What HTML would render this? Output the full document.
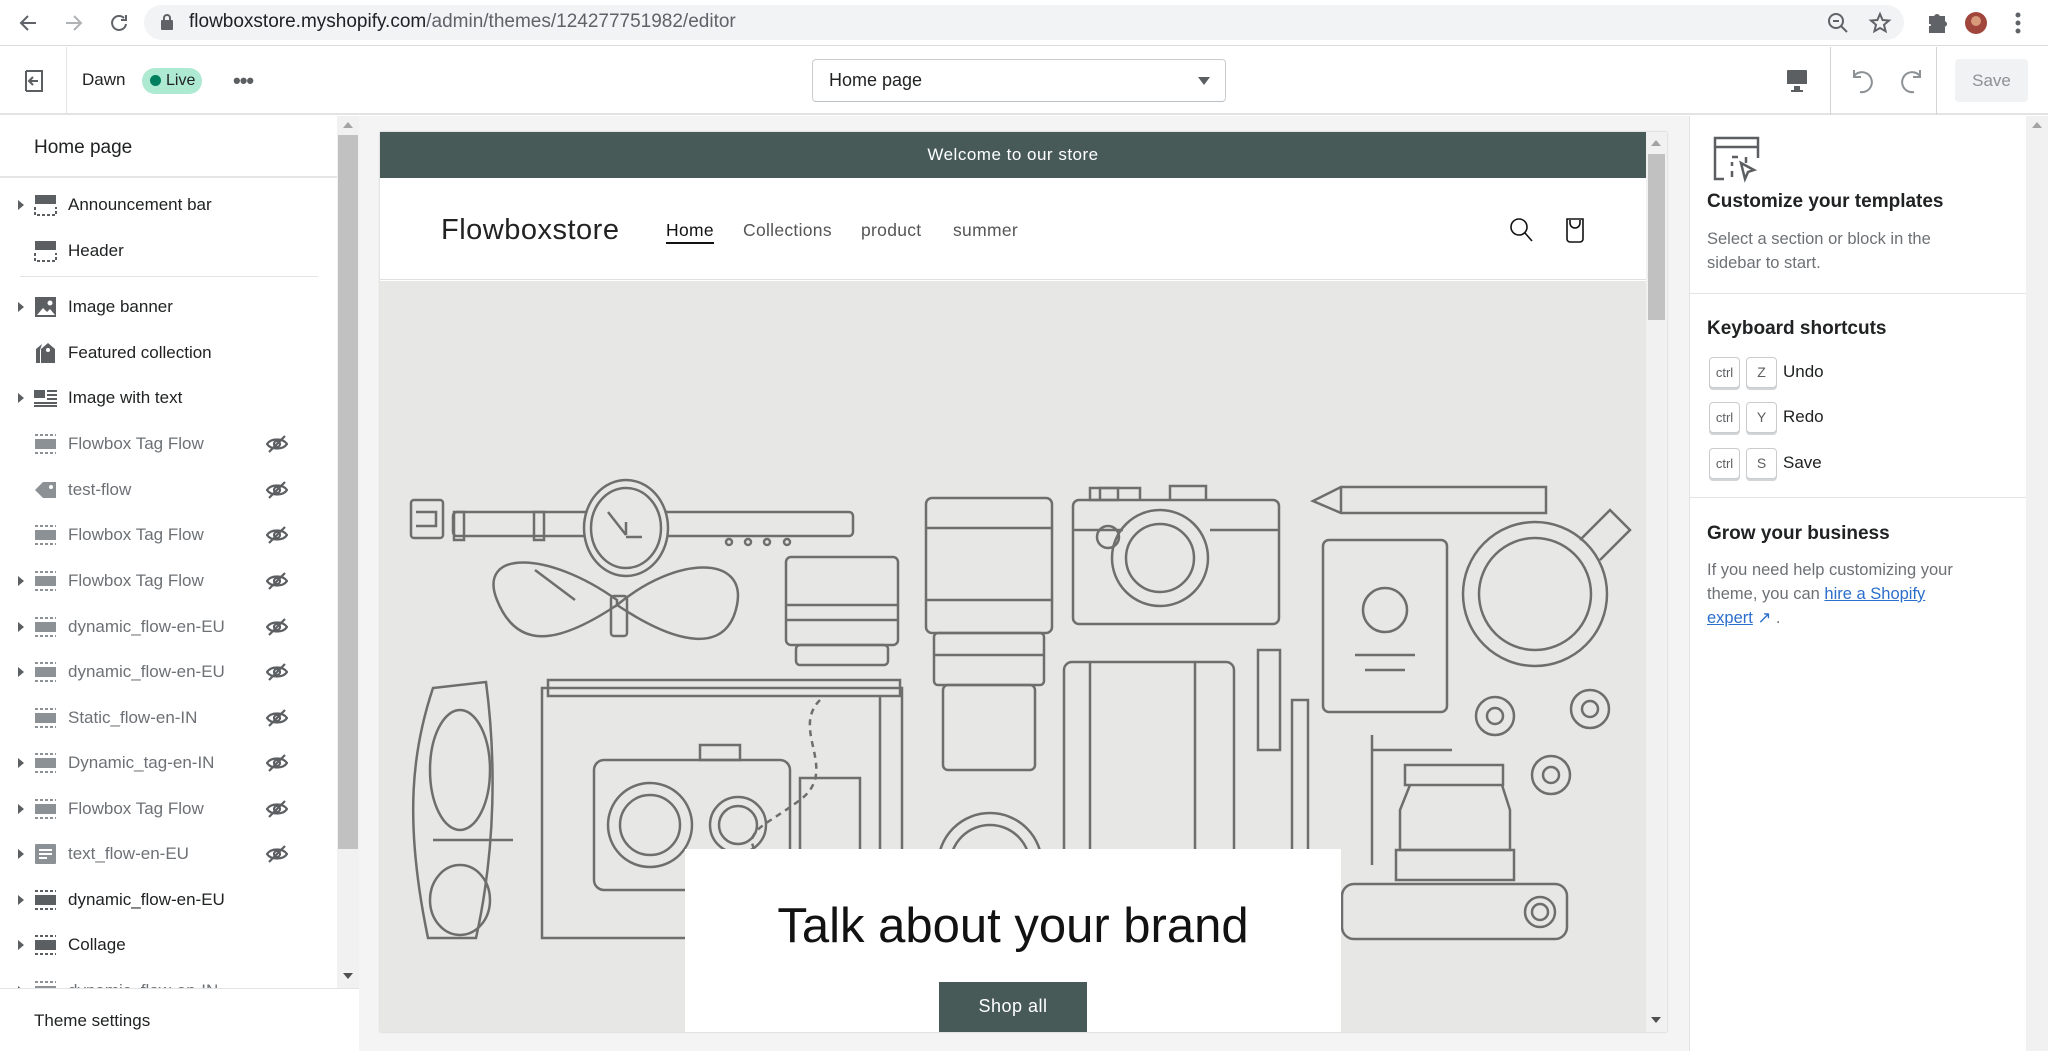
<!DOCTYPE html>
<html><head><meta charset="utf-8"><style>
*{box-sizing:border-box;margin:0;padding:0}
body{width:2048px;height:1051px;overflow:hidden;background:#fff;font-family:"Liberation Sans",sans-serif;position:relative;color:#202223}
.a{position:absolute}
.side-item{position:absolute;left:0;width:337px;height:46px;font-size:17px;display:flex;align-items:center}
.side-item .ar{position:absolute;left:18px;width:0;height:0;border-top:5px solid transparent;border-bottom:5px solid transparent;border-left:6px solid #5c5f62}
.side-item .ic{position:absolute;left:34px;width:23px;height:22px}
.side-item .tx{position:absolute;left:68px}
.side-item .eye{position:absolute;left:266px}
.g{color:#6d7175}
.key{display:inline-block;width:31px;height:31px;border:1px solid #c9cccf;border-radius:4px;box-shadow:0 2px 0 #d2d5d8;font-size:14px;color:#5c5f62;text-align:center;line-height:29px;margin-right:6px;background:#fff}
</style></head><body>

<div class="a" style="left:0;top:0;width:2048px;height:46px;background:#fff;border-bottom:1px solid #dadce0"></div>
<svg class="a" style="left:16px;top:11px" width="120" height="24" viewBox="0 0 120 24" fill="none" stroke="#5f6368" stroke-width="2">
<path d="M20 12H6M12 5l-7 7 7 7"/><path d="M50 12h14M58 5l7 7-7 7" stroke="#b0b3b6"/><path d="M108 7a7 7 0 1 0 2 6M110 4v5h-5"/></svg>
<div class="a" style="left:144px;top:5px;width:1760px;height:35px;background:#f1f3f4;border-radius:18px"></div>
<svg class="a" style="left:160px;top:13px" width="14" height="18" viewBox="0 0 14 18"><rect x="1" y="7" width="12" height="10" rx="1" fill="#5f6368"/><path d="M4 7V5a3 3 0 0 1 6 0v2" stroke="#5f6368" stroke-width="2" fill="none"/></svg>
<div class="a" style="left:189px;top:11px;font-size:19px;color:#202124">flowboxstore.myshopify.com<span style="color:#5f6368">/admin/themes/124277751982/editor</span></div>
<svg class="a" style="left:1826px;top:11px" width="210" height="24" viewBox="0 0 210 24" fill="none" stroke="#5f6368" stroke-width="2">
<circle cx="10" cy="10" r="7"/><path d="M15 15l6 6M7 10h6"/>
<path d="M54 3l2.6 6 6.4.5-5 4.3 1.6 6.4L54 17l-5.6 3.2L50 13.8l-5-4.3 6.4-.5z"/>
<path d="M104 6h5a2 2 0 0 1 4 0h5v5a2 2 0 0 1 0 4v6h-14v-5a2 2 0 0 0 0-4z" fill="#5f6368"/>
<circle cx="150" cy="12" r="11" fill="#a0463d" stroke="none"/><circle cx="150" cy="10" r="5" fill="#d89a7a" stroke="none"/>
<circle cx="192" cy="4" r="1.5" fill="#5f6368"/><circle cx="192" cy="12" r="1.5" fill="#5f6368"/><circle cx="192" cy="20" r="1.5" fill="#5f6368"/></svg>

<div class="a" style="left:0;top:47px;width:2048px;height:68px;background:#fff;border-bottom:2px solid #e1e3e5"></div>
<div class="a" style="left:66px;top:47px;width:1px;height:68px;background:#e1e3e5"></div>
<svg class="a" style="left:24px;top:70px" width="20" height="22" viewBox="0 0 20 22" fill="none" stroke="#5c5f62" stroke-width="2"><path d="M2 1v20M2 1h16v20H2M14 11H6M9 7l-4 4 4 4"/></svg>
<div class="a" style="left:82px;top:70px;font-size:17px;color:#202223">Dawn</div>
<div class="a" style="left:142px;top:68px;width:60px;height:26px;border-radius:13px;background:#aee9d1;font-size:16px;line-height:26px;padding-left:24px;color:#202223">Live</div>
<div class="a" style="left:150px;top:75px;width:11px;height:11px;border-radius:50%;background:#007f5f"></div>
<div class="a" style="left:233px;top:68px;font-size:22px;color:#5c5f62;letter-spacing:-1px;font-weight:bold">•••</div>
<div class="a" style="left:812px;top:59px;width:414px;height:43px;border:1px solid #c9cccf;border-bottom-color:#babfc3;border-radius:4px;font-size:18px;line-height:41px;padding-left:16px">Home page</div>
<div class="a" style="left:1198px;top:77px;border-left:6px solid transparent;border-right:6px solid transparent;border-top:8px solid #5c5f62"></div>
<svg class="a" style="left:1785px;top:69px" width="24" height="24" viewBox="0 0 24 24"><rect x="2" y="1" width="20" height="16" rx="1" fill="#5c5f62"/><rect x="2" y="15" width="20" height="2" fill="#fff"/><rect x="9" y="17" width="6" height="4" fill="#5c5f62"/><rect x="6" y="21" width="12" height="2" fill="#5c5f62"/></svg>
<div class="a" style="left:1830px;top:47px;width:1px;height:68px;background:#d2d5d8"></div>
<div class="a" style="left:1936px;top:47px;width:1px;height:68px;background:#d2d5d8"></div>
<svg class="a" style="left:1848px;top:67px" width="80" height="28" viewBox="0 0 80 28" fill="none" stroke="#8c9196" stroke-width="2"><path d="M6 3v7h7M6 9a10 10 0 1 1 6 16"/><path d="M72 3v7h-7M72 9a10 10 0 1 0-6 16"/></svg>
<div class="a" style="left:1955px;top:59px;width:73px;height:43px;background:#f1f2f3;border-radius:4px;font-size:17px;color:#8c9196;text-align:center;line-height:43px">Save</div>

<div class="a" style="left:0;top:116px;width:337px;height:935px;background:#fff"></div>
<div class="a" style="left:34px;top:137px;font-size:19px">Home page</div>
<div class="a" style="left:0;top:176px;width:337px;height:2px;background:#e4e5e7"></div>
<div class="a" style="left:20px;top:276px;width:298px;height:1px;background:#e1e3e5"></div>
<div class="a" style="left:337px;top:116px;width:22px;height:875px;background:#f1f1f1"></div>
<div class="a" style="left:338px;top:135px;width:20px;height:714px;background:#c1c1c1"></div>
<div class="a" style="left:343px;top:122px;border-left:5px solid transparent;border-right:5px solid transparent;border-bottom:6px solid #a3a3a3"></div>
<div class="a" style="left:343px;top:973px;border-left:5px solid transparent;border-right:5px solid transparent;border-top:6px solid #505050"></div>

<div class="side-item" style="top:182px"><span class="ar"></span><svg class="ic" viewBox="0 0 23 22"><rect x="1" y="1" width="21" height="9" fill="#5c5f62"/><path d="M1 13v8h21v-8" stroke="#5c5f62" stroke-width="2" stroke-dasharray="3 2" fill="none"/></svg><span class="tx">Announcement bar</span></div>
<div class="side-item" style="top:228px"><svg class="ic" viewBox="0 0 23 22"><rect x="1" y="1" width="21" height="9" fill="#5c5f62"/><path d="M1 13v8h21v-8" stroke="#5c5f62" stroke-width="2" stroke-dasharray="3 2" fill="none"/></svg><span class="tx">Header</span></div>
<div class="side-item" style="top:284px"><span class="ar"></span><svg class="ic" viewBox="0 0 23 22"><rect x="1" y="1" width="21" height="20" fill="#5c5f62"/><path d="M3 19l6-7 4 4 3-3 5 6z" fill="#fff"/><circle cx="16" cy="7" r="2.5" fill="#fff"/></svg><span class="tx">Image banner</span></div>
<div class="side-item" style="top:330px"><svg class="ic" viewBox="0 0 23 22"><path d="M8 2l-6 5v14h4V8z" fill="#5c5f62"/><path d="M14 1l-7 6v14h14V7z" fill="#5c5f62"/><circle cx="14" cy="8" r="2" fill="#fff"/></svg><span class="tx">Featured collection</span></div>
<div class="side-item" style="top:375px"><span class="ar"></span><svg class="ic" viewBox="0 0 23 22"><rect x="0" y="3" width="11" height="8" fill="#5c5f62"/><path d="M13 4h10M13 8h10M13 12h10M0 16h23M0 19h23" stroke="#5c5f62" stroke-width="2"/></svg><span class="tx">Image with text</span></div>

<div class="side-item g" style="top:421px"><svg class="ic" viewBox="0 0 23 22"><rect x="1" y="6" width="21" height="10" fill="#8c9196"/><path d="M1 2h21M1 20h21" stroke="#8c9196" stroke-width="2" stroke-dasharray="3 2"/></svg><span class="tx">Flowbox Tag Flow</span><svg class="eye" width="22" height="20" viewBox="0 0 22 20" fill="none" stroke="#5c5f62" stroke-width="2.2"><path d="M1 10c4-6 16-6 20 0-4 6-16 6-20 0z"/><circle cx="11" cy="10" r="3"/><path d="M3 18L19 2"/></svg></div>
<div class="side-item g" style="top:467px"><svg class="ic" viewBox="0 0 23 22"><path d="M1 11l8-8h13v16H9z" fill="#8c9196"/><circle cx="17" cy="8" r="2" fill="#fff"/></svg><span class="tx">test-flow</span><svg class="eye" width="22" height="20" viewBox="0 0 22 20" fill="none" stroke="#5c5f62" stroke-width="2.2"><path d="M1 10c4-6 16-6 20 0-4 6-16 6-20 0z"/><circle cx="11" cy="10" r="3"/><path d="M3 18L19 2"/></svg></div>
<div class="side-item g" style="top:512px"><svg class="ic" viewBox="0 0 23 22"><rect x="1" y="6" width="21" height="10" fill="#8c9196"/><path d="M1 2h21M1 20h21" stroke="#8c9196" stroke-width="2" stroke-dasharray="3 2"/></svg><span class="tx">Flowbox Tag Flow</span><svg class="eye" width="22" height="20" viewBox="0 0 22 20" fill="none" stroke="#5c5f62" stroke-width="2.2"><path d="M1 10c4-6 16-6 20 0-4 6-16 6-20 0z"/><circle cx="11" cy="10" r="3"/><path d="M3 18L19 2"/></svg></div>
<div class="side-item g" style="top:558px"><span class="ar"></span><svg class="ic" viewBox="0 0 23 22"><rect x="1" y="6" width="21" height="10" fill="#8c9196"/><path d="M1 2h21M1 20h21" stroke="#8c9196" stroke-width="2" stroke-dasharray="3 2"/></svg><span class="tx">Flowbox Tag Flow</span><svg class="eye" width="22" height="20" viewBox="0 0 22 20" fill="none" stroke="#5c5f62" stroke-width="2.2"><path d="M1 10c4-6 16-6 20 0-4 6-16 6-20 0z"/><circle cx="11" cy="10" r="3"/><path d="M3 18L19 2"/></svg></div>
<div class="side-item g" style="top:604px"><span class="ar"></span><svg class="ic" viewBox="0 0 23 22"><rect x="1" y="6" width="21" height="10" fill="#8c9196"/><path d="M1 2h21M1 20h21" stroke="#8c9196" stroke-width="2" stroke-dasharray="3 2"/></svg><span class="tx">dynamic_flow-en-EU</span><svg class="eye" width="22" height="20" viewBox="0 0 22 20" fill="none" stroke="#5c5f62" stroke-width="2.2"><path d="M1 10c4-6 16-6 20 0-4 6-16 6-20 0z"/><circle cx="11" cy="10" r="3"/><path d="M3 18L19 2"/></svg></div>
<div class="side-item g" style="top:649px"><span class="ar"></span><svg class="ic" viewBox="0 0 23 22"><rect x="1" y="6" width="21" height="10" fill="#8c9196"/><path d="M1 2h21M1 20h21" stroke="#8c9196" stroke-width="2" stroke-dasharray="3 2"/></svg><span class="tx">dynamic_flow-en-EU</span><svg class="eye" width="22" height="20" viewBox="0 0 22 20" fill="none" stroke="#5c5f62" stroke-width="2.2"><path d="M1 10c4-6 16-6 20 0-4 6-16 6-20 0z"/><circle cx="11" cy="10" r="3"/><path d="M3 18L19 2"/></svg></div>
<div class="side-item g" style="top:695px"><svg class="ic" viewBox="0 0 23 22"><rect x="1" y="6" width="21" height="10" fill="#8c9196"/><path d="M1 2h21M1 20h21" stroke="#8c9196" stroke-width="2" stroke-dasharray="3 2"/></svg><span class="tx">Static_flow-en-IN</span><svg class="eye" width="22" height="20" viewBox="0 0 22 20" fill="none" stroke="#5c5f62" stroke-width="2.2"><path d="M1 10c4-6 16-6 20 0-4 6-16 6-20 0z"/><circle cx="11" cy="10" r="3"/><path d="M3 18L19 2"/></svg></div>
<div class="side-item g" style="top:740px"><span class="ar"></span><svg class="ic" viewBox="0 0 23 22"><rect x="1" y="6" width="21" height="10" fill="#8c9196"/><path d="M1 2h21M1 20h21" stroke="#8c9196" stroke-width="2" stroke-dasharray="3 2"/></svg><span class="tx">Dynamic_tag-en-IN</span><svg class="eye" width="22" height="20" viewBox="0 0 22 20" fill="none" stroke="#5c5f62" stroke-width="2.2"><path d="M1 10c4-6 16-6 20 0-4 6-16 6-20 0z"/><circle cx="11" cy="10" r="3"/><path d="M3 18L19 2"/></svg></div>
<div class="side-item g" style="top:786px"><span class="ar"></span><svg class="ic" viewBox="0 0 23 22"><rect x="1" y="6" width="21" height="10" fill="#8c9196"/><path d="M1 2h21M1 20h21" stroke="#8c9196" stroke-width="2" stroke-dasharray="3 2"/></svg><span class="tx">Flowbox Tag Flow</span><svg class="eye" width="22" height="20" viewBox="0 0 22 20" fill="none" stroke="#5c5f62" stroke-width="2.2"><path d="M1 10c4-6 16-6 20 0-4 6-16 6-20 0z"/><circle cx="11" cy="10" r="3"/><path d="M3 18L19 2"/></svg></div>
<div class="side-item g" style="top:831px"><span class="ar"></span><svg class="ic" viewBox="0 0 23 22"><rect x="1" y="1" width="21" height="20" rx="1" fill="#8c9196"/><path d="M5 7h13M5 11h13M5 15h8" stroke="#fff" stroke-width="2"/></svg><span class="tx">text_flow-en-EU</span><svg class="eye" width="22" height="20" viewBox="0 0 22 20" fill="none" stroke="#5c5f62" stroke-width="2.2"><path d="M1 10c4-6 16-6 20 0-4 6-16 6-20 0z"/><circle cx="11" cy="10" r="3"/><path d="M3 18L19 2"/></svg></div>
<div class="side-item" style="top:877px"><span class="ar"></span><svg class="ic" viewBox="0 0 23 22"><rect x="1" y="6" width="21" height="10" fill="#5c5f62"/><path d="M1 2h21M1 20h21" stroke="#5c5f62" stroke-width="2" stroke-dasharray="3 2"/></svg><span class="tx">dynamic_flow-en-EU</span></div>
<div class="side-item" style="top:922px"><span class="ar"></span><svg class="ic" viewBox="0 0 23 22"><rect x="1" y="6" width="21" height="10" fill="#5c5f62"/><path d="M1 2h21M1 20h21" stroke="#5c5f62" stroke-width="2" stroke-dasharray="3 2"/></svg><span class="tx">Collage</span></div>
<div class="side-item g" style="top:968px"><span class="ar"></span><svg class="ic" viewBox="0 0 23 22"><rect x="1" y="6" width="21" height="10" fill="#8c9196"/><path d="M1 2h21M1 20h21" stroke="#8c9196" stroke-width="2" stroke-dasharray="3 2"/></svg><span class="tx">dynamic_flow-en-IN</span></div>
<div class="a" style="left:0;top:988px;width:359px;height:63px;background:#fff;border-top:1px solid #e1e3e5"></div>
<div class="a" style="left:34px;top:1011px;font-size:17px">Theme settings</div>

<div class="a" style="left:359px;top:116px;width:1330px;height:935px;background:#f4f4f4"></div>
<div class="a" style="left:380px;top:132px;width:1287px;height:900px;background:#fff;box-shadow:0 0 2px rgba(0,0,0,.2)"></div>
<div class="a" style="left:380px;top:132px;width:1266px;height:46px;background:#475a58;color:#fff;font-size:17px;text-align:center;line-height:46px;letter-spacing:.5px">Welcome to our store</div>
<div class="a" style="left:380px;top:178px;width:1266px;height:102px;background:#fff;border-bottom:1px solid #e0e0e0"></div>
<div class="a" style="left:441px;top:214px;font-size:29px;color:#222;letter-spacing:.5px">Flowboxstore</div>
<div class="a" style="left:666px;top:220px;font-size:17.5px;color:#121212;border-bottom:2px solid #121212;padding-bottom:1px;letter-spacing:.3px">Home</div>
<div class="a" style="left:743px;top:220px;font-size:17.5px;color:#555;letter-spacing:.3px">Collections</div>
<div class="a" style="left:861px;top:220px;font-size:17.5px;color:#555;letter-spacing:.3px">product</div>
<div class="a" style="left:953px;top:220px;font-size:17.5px;color:#555;letter-spacing:.3px">summer</div>
<svg class="a" style="left:1508px;top:216px" width="80" height="30" viewBox="0 0 80 30" fill="none" stroke="#121212" stroke-width="1.6"><circle cx="11" cy="11" r="8"/><path d="M17 17l7 8"/><path d="M59 3h16v20a3 3 0 0 1-3 3H62a3 3 0 0 1-3-3z"/><path d="M62 4v3a5 5 0 0 0 10 0V4"/></svg>
<div class="a" style="left:380px;top:281px;width:1266px;height:751px;background:#e7e7e5"></div>
<svg class="a" style="left:380px;top:281px" width="1266" height="751" viewBox="380 281 1266 751" fill="none" stroke="#6e6e6e" stroke-width="2.5">
<rect x="411" y="500" width="32" height="38" rx="3"/><path d="M416 512h20v14h-20"/><rect x="453" y="512" width="400" height="24" rx="4"/><rect x="454" y="512" width="10" height="28"/><rect x="534" y="512" width="10" height="28"/>
<ellipse cx="626" cy="528" rx="42" ry="48" fill="#e7e7e5"/><ellipse cx="626" cy="528" rx="35" ry="40"/><path d="M626 535l-18-23M626 535v-13M626 537h16"/>
<circle cx="729" cy="542" r="3"/><circle cx="748" cy="542" r="3"/><circle cx="767" cy="542" r="3"/><circle cx="787" cy="542" r="3"/>
<path d="M617 600c-70-50-140-50-120 0s60 45 120 5c60 40 110 50 120 0s-60-50-120 0z"/><rect x="611" y="596" width="16" height="40" rx="3"/><path d="M535 570l40 30"/>
<rect x="786" y="557" width="112" height="88" rx="5"/><rect x="796" y="645" width="92" height="20" rx="4"/><path d="M786 605h112M786 620h112"/>
<rect x="926" y="498" width="126" height="135" rx="6"/><rect x="934" y="633" width="110" height="52" rx="4"/><rect x="943" y="685" width="92" height="85" rx="5"/><path d="M926 528h126M926 600h126M934 655h110"/>
<rect x="1073" y="500" width="206" height="124" rx="6"/><circle cx="1160" cy="558" r="48"/><circle cx="1160" cy="558" r="34"/><circle cx="1108" cy="537" r="11"/><path d="M1100 500v-12h40v12M1170 500v-14h36v14M1073 530h50M1210 530h69"/><rect x="1090" y="488" width="28" height="12"/>
<path d="M1313 501l28-14h205v26H1341z"/><path d="M1341 487v26"/>
<rect x="1323" y="540" width="124" height="172" rx="6"/><circle cx="1385" cy="610" r="22"/><path d="M1355 655h60M1365 670h40"/>
<circle cx="1535" cy="594" r="72"/><circle cx="1535" cy="594" r="56"/><path d="M1580 540l30-30 20 20-30 30"/>
<path d="M433 688c-20 60-30 130-5 250h48c20-90 20-180 10-256z"/><path d="M433 840h80"/><ellipse cx="460" cy="770" rx="30" ry="60"/><ellipse cx="460" cy="900" rx="30" ry="35"/>
<rect x="542" y="688" width="360" height="250"/><rect x="548" y="680" width="352" height="16"/><path d="M880 696v240"/><path d="M820 700c-30 30 20 70-20 100s-60 30-40 60" stroke-dasharray="6 5"/>
<rect x="594" y="760" width="196" height="130" rx="10"/><circle cx="650" cy="825" r="42"/><circle cx="650" cy="825" r="30"/><circle cx="738" cy="825" r="28"/><circle cx="738" cy="825" r="19"/><rect x="700" y="745" width="40" height="15"/><rect x="800" y="778" width="60" height="110"/>
<circle cx="990" cy="865" r="52"/><circle cx="990" cy="865" r="40"/>
<rect x="1064" y="662" width="170" height="370" rx="8"/><path d="M1090 662v370M1195 662v370"/>
<rect x="1258" y="650" width="22" height="100"/><rect x="1292" y="700" width="16" height="200"/>
<circle cx="1495" cy="716" r="19"/><circle cx="1495" cy="716" r="8"/><circle cx="1590" cy="709" r="19"/><circle cx="1590" cy="709" r="8"/><circle cx="1551" cy="775" r="19"/><circle cx="1551" cy="775" r="8"/>
<rect x="1405" y="765" width="98" height="20"/><path d="M1410 785l-10 25v40h110v-40l-8-25"/><rect x="1396" y="850" width="118" height="30"/><rect x="1342" y="884" width="225" height="55" rx="12"/><circle cx="1540" cy="912" r="15"/><circle cx="1540" cy="912" r="8"/><path d="M1372 750h80M1372 735v130"/>
</svg>
<div class="a" style="left:685px;top:849px;width:656px;height:183px;background:#fff"></div>
<div class="a" style="left:685px;top:898px;width:656px;text-align:center;font-size:49px;color:#121212">Talk about your brand</div>
<div class="a" style="left:939px;top:982px;width:148px;height:50px;background:#475a58;color:#fff;font-size:18px;text-align:center;line-height:48px;letter-spacing:.5px">Shop all</div>
<div class="a" style="left:1646px;top:132px;width:21px;height:900px;background:#f1f1f1"></div>
<div class="a" style="left:1648px;top:154px;width:17px;height:166px;background:#c1c1c1"></div>
<div class="a" style="left:1651px;top:140px;border-left:5px solid transparent;border-right:5px solid transparent;border-bottom:6px solid #a3a3a3"></div>
<div class="a" style="left:1651px;top:1017px;border-left:5px solid transparent;border-right:5px solid transparent;border-top:6px solid #505050"></div>

<div class="a" style="left:1689px;top:116px;width:337px;height:935px;background:#fff;border-left:1px solid #e1e3e5"></div>
<div class="a" style="left:2026px;top:116px;width:22px;height:935px;background:#f1f1f1"></div>
<div class="a" style="left:2032px;top:122px;border-left:5px solid transparent;border-right:5px solid transparent;border-bottom:6px solid #a3a3a3"></div>
<svg class="a" style="left:1712px;top:135px" width="48" height="50" viewBox="0 0 48 50" fill="none" stroke="#5c5f62" stroke-width="2.5"><path d="M12 44H3V3h43v20"/><path d="M3 12h43"/><path d="M20 22h6M34 22v6M20 27v4M20 36v6" /><path d="M29 28l13 7-6 2-3 7z" fill="#fff"/></svg>
<div class="a" style="left:1707px;top:191px;font-size:19px;font-weight:bold">Customize your templates</div>
<div class="a g" style="left:1707px;top:227px;font-size:16.5px;line-height:24px;width:300px">Select a section or block in the<br>sidebar to start.</div>
<div class="a" style="left:1690px;top:293px;width:336px;height:1px;background:#e1e3e5"></div>
<div class="a" style="left:1707px;top:318px;font-size:19px;font-weight:bold">Keyboard shortcuts</div>
<div class="a" style="left:1709px;top:356px;font-size:17px;line-height:31px"><span class="key" style="font-size:13px">ctrl</span><span class="key">Z</span>Undo</div>
<div class="a" style="left:1709px;top:401px;font-size:17px;line-height:31px"><span class="key" style="font-size:13px">ctrl</span><span class="key">Y</span>Redo</div>
<div class="a" style="left:1709px;top:447px;font-size:17px;line-height:31px"><span class="key" style="font-size:13px">ctrl</span><span class="key">S</span>Save</div>
<div class="a" style="left:1690px;top:497px;width:336px;height:1px;background:#e1e3e5"></div>
<div class="a" style="left:1707px;top:523px;font-size:19px;font-weight:bold">Grow your business</div>
<div class="a g" style="left:1707px;top:558px;font-size:16.5px;line-height:24px;width:300px">If you need help customizing your<br>theme, you can <span style="color:#2c6ecb;text-decoration:underline">hire a Shopify</span><br><span style="color:#2c6ecb;text-decoration:underline">expert</span> <span style="color:#2c6ecb">↗</span> .</div>
</body></html>
